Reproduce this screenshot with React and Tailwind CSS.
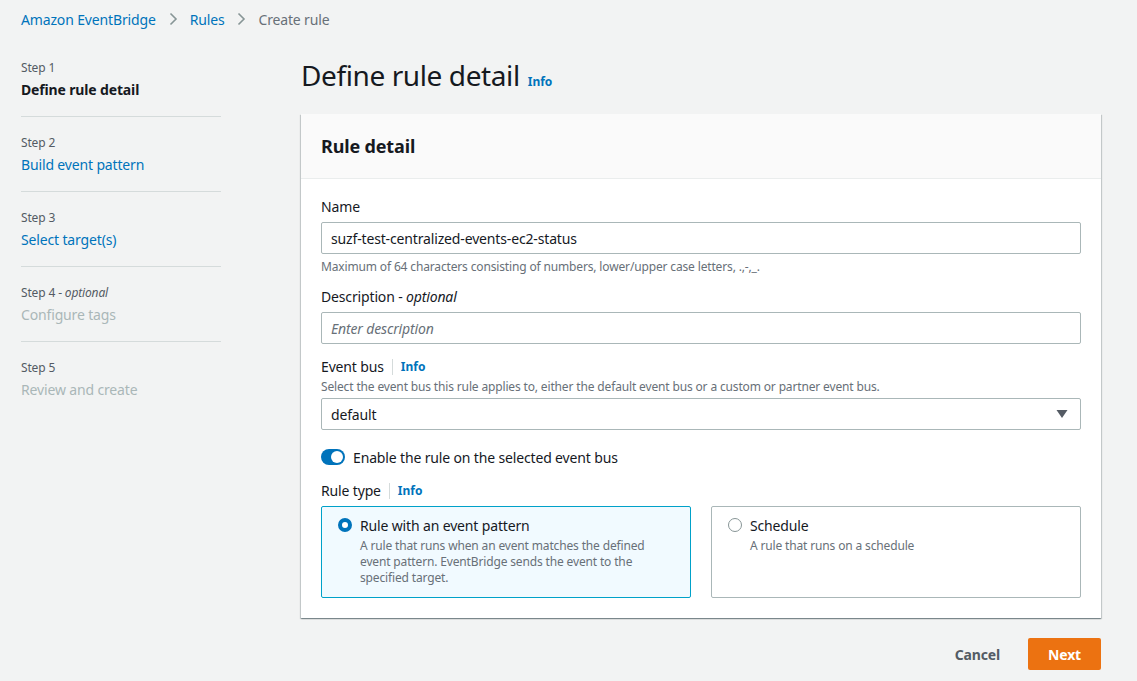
import React from "react";

const steps = [
  { label: "Step 1", title: "Define rule detail", state: "active" },
  { label: "Step 2", title: "Build event pattern", state: "link" },
  { label: "Step 3", title: "Select target(s)", state: "link" },
  { label: "Step 4", optional: true, title: "Configure tags", state: "disabled" },
  { label: "Step 5", title: "Review and create", state: "disabled" },
];

function Chevron() {
  return (
    <svg width="16" height="16" viewBox="0 0 16 16" className="mx-[9px]">
      <path d="M5.5 2.5l5.5 5.5-5.5 5.5" fill="none" stroke="#879596" strokeWidth="1.6" />
    </svg>
  );
}

function Info() {
  return <span className="text-[12px] font-bold text-[#0073bb] tracking-normal">Info</span>;
}

function LabelWithInfo({ children }) {
  return (
    <div className="flex items-center text-[14px] text-[#16191f] leading-[20px]">
      <span>{children}</span>
      <span className="mx-[8px] h-[16px] w-px bg-[#d5dbdb]" />
      <Info />
    </div>
  );
}

export default function App() {
  return (
    <div
      className="min-h-screen bg-[#f2f3f3] text-[#16191f] tracking-[-0.15px]"
      style={{ fontFamily: '"Noto Sans", "Open Sans", Arial, sans-serif' }}
    >
      {/* breadcrumb */}
      <div className="flex items-center px-[21px] pt-[9px] h-[29px] text-[14px]">
        <span className="text-[#0073bb]">Amazon EventBridge</span>
        <Chevron />
        <span className="text-[#0073bb]">Rules</span>
        <Chevron />
        <span className="text-[#687078]">Create rule</span>
      </div>

      <div className="flex px-[21px] pt-[21px]">
        {/* steps */}
        <div className="w-[200px] shrink-0 pt-[10px]">
          {steps.map((s, i) => (
            <div
              key={i}
              className={`pb-[16px] ${i === 0 ? "" : "pt-[18px]"} ${
                i < steps.length - 1 ? "border-b border-[#d5dbdb]" : ""
              }`}
            >
              <div className="text-[12px] text-[#545b64] leading-[16px]">
                {s.label}
                {s.optional && (
                  <>
                    {" - "}
                    <i>optional</i>
                  </>
                )}
              </div>
              <div
                className={`mt-[4px] text-[14px] leading-[20px] ${
                  s.state === "active"
                    ? "font-bold text-[#16191f]"
                    : s.state === "link"
                    ? "text-[#0073bb]"
                    : "text-[#aab7b8]"
                }`}
              >
                {s.title}
              </div>
            </div>
          ))}
        </div>

        {/* main */}
        <div className="ml-[80px] w-[800px]">
          <div className="flex items-baseline h-[34px] mt-[8px]">
            <h1 className="text-[28px] leading-[34px] font-normal text-[#16191f] tracking-[-0.4px]">
              Define rule detail
            </h1>
            <span className="ml-[8px]">
              <Info />
            </span>
          </div>

          <div className="mt-[22px] bg-white shadow-[0_1px_1px_0_rgba(0,28,36,0.3),1px_1px_1px_0_rgba(0,28,36,0.15),-1px_1px_1px_0_rgba(0,28,36,0.15)]">
            <div className="h-[65px] bg-[#fafafa] border-b border-[#eaeded] flex items-center px-[20px]">
              <h2 className="text-[18px] font-bold leading-[22px]">Rule detail</h2>
            </div>

            <div className="px-[20px] pt-[18px] pb-[20px]">
              {/* name */}
              <div className="text-[14px] leading-[20px]">Name</div>
              <div className="mt-[5px] h-[32px] border border-[#aab7b8] rounded-[2px] flex items-center px-[9px] text-[14px]">
                suzf-test-centralized-events-ec2-status
              </div>
              <div className="mt-[4px] text-[12px] leading-[18px] text-[#687078]">
                Maximum of 64 characters consisting of numbers, lower/upper case letters, .,-,_.
              </div>

              {/* description */}
              <div className="mt-[11px] text-[14px] leading-[20px]">
                Description - <i>optional</i>
              </div>
              <div className="mt-[5px] h-[32px] border border-[#aab7b8] rounded-[2px] flex items-center px-[9px] text-[14px] italic text-[#687078]">
                Enter description
              </div>

              {/* event bus */}
              <div className="mt-[13px]">
                <LabelWithInfo>Event bus</LabelWithInfo>
              </div>
              <div className="mt-[1px] text-[12px] leading-[18px] text-[#687078]">
                Select the event bus this rule applies to, either the default event bus or a custom or partner event bus.
              </div>
              <div className="mt-[2px] h-[32px] border border-[#aab7b8] rounded-[2px] flex items-center justify-between pl-[9px] pr-[12px] text-[14px]">
                <span>default</span>
                <svg width="12" height="10" viewBox="0 0 12 10">
                  <path d="M0.5 1h11L6 9z" fill="#545b64" />
                </svg>
              </div>

              {/* toggle */}
              <div className="mt-[17px] flex items-center h-[20px]">
                <div className="w-[24px] h-[16px] rounded-full bg-[#0073bb] flex items-center justify-end pr-[2px]">
                  <div className="w-[12px] h-[12px] rounded-full bg-white" />
                </div>
                <span className="ml-[8px] text-[14px]">Enable the rule on the selected event bus</span>
              </div>

              {/* rule type */}
              <div className="mt-[14px]">
                <LabelWithInfo>Rule type</LabelWithInfo>
              </div>
              <div className="mt-[5px] grid grid-cols-2 gap-[20px]">
                <div className="h-[92px] border border-[#00a1c9] bg-[#f1faff] rounded-[2px] flex pt-[9px] pl-[16px] pr-[16px]">
                  <div className="mt-[2px] w-[14px] h-[14px] rounded-full border-[4px] border-[#0073bb] bg-white shrink-0" />
                  <div className="ml-[8px]">
                    <div className="text-[14px] leading-[20px]">Rule with an event pattern</div>
                    <div className="mt-[2px] text-[12px] leading-[16px] text-[#687078] w-[300px]">
                      A rule that runs when an event matches the defined event pattern. EventBridge sends the event to the specified target.
                    </div>
                  </div>
                </div>
                <div className="h-[92px] border border-[#aab7b8] bg-white rounded-[2px] flex pt-[9px] pl-[16px] pr-[16px]">
                  <div className="mt-[2px] w-[14px] h-[14px] rounded-full border-[1.5px] border-[#879596] bg-white shrink-0" />
                  <div className="ml-[8px]">
                    <div className="text-[14px] leading-[20px]">Schedule</div>
                    <div className="mt-[2px] text-[12px] leading-[16px] text-[#687078]">A rule that runs on a schedule</div>
                  </div>
                </div>
              </div>
            </div>
          </div>

          {/* actions */}
          <div className="mt-[20px] flex justify-end items-center">
            <span className="text-[14px] font-bold text-[#545b64] px-[20px]">Cancel</span>
            <div className="ml-[8px] h-[32px] px-[20px] flex items-center bg-[#ec7211] rounded-[2px] text-[14px] font-bold text-white">
              Next
            </div>
          </div>
        </div>
      </div>
    </div>
  );
}
